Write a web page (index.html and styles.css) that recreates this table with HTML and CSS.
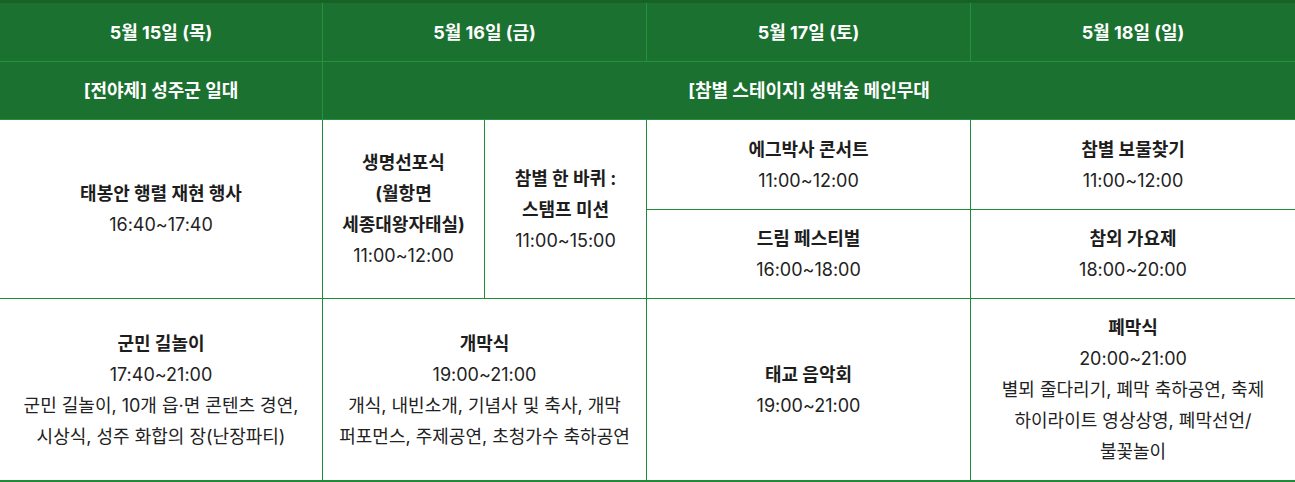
FILE: index.html
```html
<!DOCTYPE html>
<html lang="ko">
<head>
<meta charset="utf-8">
<title>참별 축제 일정</title>
<link rel="stylesheet" href="styles.css">
</head>
<body>
<table class="schedule">
  <colgroup>
    <col class="c1"><col class="c2a"><col class="c2b"><col class="c3"><col class="c4">
  </colgroup>
  <thead>
    <tr class="day-row">
      <th>5월 15일 (목)</th>
      <th colspan="2">5월 16일 (금)</th>
      <th>5월 17일 (토)</th>
      <th>5월 18일 (일)</th>
    </tr>
    <tr class="place-row">
      <th>[전야제] 성주군 일대</th>
      <th colspan="4">[참별 스테이지] 성밖숲 메인무대</th>
    </tr>
  </thead>
  <tbody>
    <tr class="r-top">
      <td rowspan="2"><strong>태봉안 행렬 재현 행사</strong><br>16:40~17:40</td>
      <td rowspan="2"><strong>생명선포식<br>(월항면<br>세종대왕자태실)</strong><br>11:00~12:00</td>
      <td rowspan="2"><strong>참별 한 바퀴 :<br>스탬프 미션</strong><br>11:00~15:00</td>
      <td><strong>에그박사 콘서트</strong><br>11:00~12:00</td>
      <td><strong>참별 보물찾기</strong><br>11:00~12:00</td>
    </tr>
    <tr class="r-mid">
      <td><strong>드림 페스티벌</strong><br>16:00~18:00</td>
      <td><strong>참외 가요제</strong><br>18:00~20:00</td>
    </tr>
    <tr class="r-bottom">
      <td><strong>군민 길놀이</strong><br>17:40~21:00<br>군민 길놀이, 10개 읍·면 콘텐츠 경연,<br>시상식, 성주 화합의 장(난장파티)</td>
      <td colspan="2"><strong>개막식</strong><br>19:00~21:00<br>개식, 내빈소개, 기념사 및 축사, 개막<br>퍼포먼스, 주제공연, 초청가수 축하공연</td>
      <td><strong>태교 음악회</strong><br>19:00~21:00</td>
      <td><strong>폐막식</strong><br>20:00~21:00<br>별뫼 줄다리기, 폐막 축하공연, 축제<br>하이라이트 영상상영, 폐막선언/<br>불꽃놀이</td>
    </tr>
  </tbody>
</table>
</body>
</html>
```
FILE: styles.css
```css
html, body {
  margin: 0;
  padding: 0;
  background: #ffffff;
}
body {
  font-family: Inter, "Noto Sans CJK KR", sans-serif;
  font-size: 18px;
  color: #222222;
}
.schedule {
  width: 1296px;
  margin-left: -1px;
  border-collapse: collapse;
  table-layout: fixed;
  border-top: 3px solid #176227;
  border-bottom: 2px solid #1f8b38;
  text-align: center;
}
.c1 { width: 323px; }
.c2a { width: 162px; }
.c2b { width: 162px; }
.c3 { width: 324px; }
.c4 { width: 325px; }
.schedule th,
.schedule td {
  border: 1px solid #1f8b38;
  padding: 13px 6px;
  line-height: 31px;
  vertical-align: middle;
}
.schedule th {
  background: #1b7130;
  color: #ffffff;
  font-weight: 700;
  border-color: #23923c;
}
.day-row th { height: 31px; padding-top: 14px; padding-bottom: 13px; }
.place-row th { height: 31px; padding-top: 13px; padding-bottom: 13px; }
.schedule td strong { font-weight: 700; color: #1d1d1d; }
.r-top td { height: 63px; }
.r-mid td { height: 62px; }
.r-bottom td { height: 155px; }
```
